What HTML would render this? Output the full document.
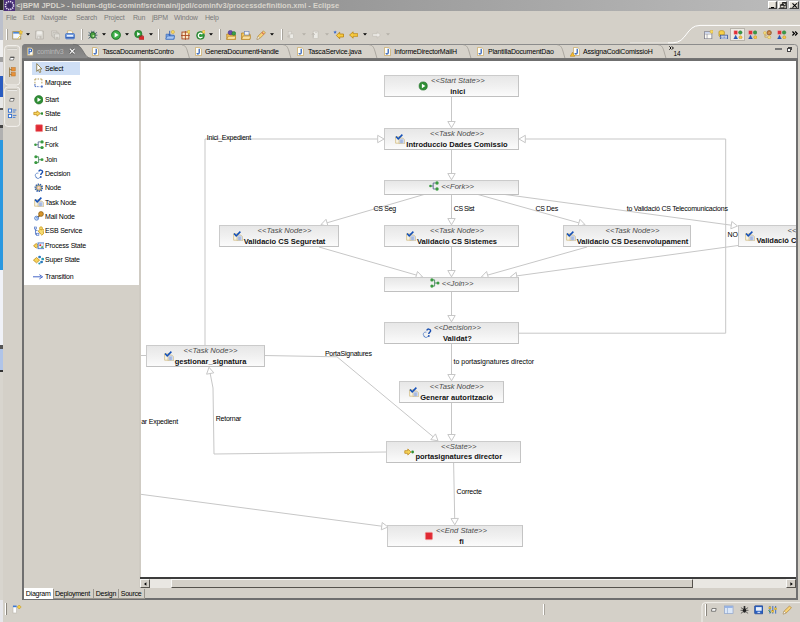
<!DOCTYPE html>
<html>
<head>
<meta charset="utf-8">
<title>jBPM JPDL - Eclipse</title>
<style>
html,body{margin:0;padding:0;}
body{width:800px;height:622px;overflow:hidden;background:#d4d0c8;position:relative;font-family:"Liberation Sans",sans-serif;font-size:7px;color:#000;}
.a{position:absolute;}
.t{position:absolute;white-space:nowrap;font-size:7px;line-height:9px;letter-spacing:-0.2px;}
#title{left:3px;top:0;width:797px;height:10.6px;background:linear-gradient(to right,#7e7e7e 0%,#bcbcbc 100%);}
#title .t{left:13.2px;top:1px;font-weight:bold;font-size:7.5px;color:#d8d4cc;letter-spacing:0;}
.menu{top:13px;color:#7a7a7a;}
.wb{position:absolute;top:0.9px;width:9.4px;height:8.6px;background:#e6e2da;border:0.7px solid;border-color:#fff #404040 #404040 #fff;box-sizing:border-box;box-shadow:inset -0.6px -0.6px 0 #9a968e;}
/* nodes */
.n{position:absolute;box-sizing:border-box;border:1px solid #cbcbcb;border-bottom-color:#c0c0c0;border-right-color:#c4c4c4;background:linear-gradient(to bottom,#e7e7e7 0%,#f0f0f0 50%,#fbfbfb 100%);}
.n{display:flex;align-items:center;justify-content:center;}
.n .c{text-align:center;white-space:nowrap;}
.st{font-style:italic;font-size:7.6px;line-height:9px;color:#4c4c4c;}
.nm{font-weight:bold;font-size:7.5px;line-height:9px;color:#111;margin-top:1.5px;}
.n.s1{padding-bottom:2.6px;}
.l{position:absolute;white-space:nowrap;font-size:7px;line-height:9px;letter-spacing:-0.22px;color:#000;}
.p{position:absolute;left:45px;white-space:nowrap;font-size:7px;line-height:9px;letter-spacing:-0.2px;}
.tab{position:absolute;top:47px;white-space:nowrap;font-size:7px;line-height:9px;letter-spacing:-0.18px;color:#000;}
</style>
</head>
<body>
<!-- left strip of window behind -->
<div class="a" style="left:0;top:0;width:2.8px;height:622px;background:linear-gradient(to bottom,#2a2a2a 0px,#2a2a2a 10.5px,#bcc0cc 10.5px,#bcc0cc 40px,#f0f0f0 40px,#f0f0f0 57px,#a0a0a0 57px,#a0a0a0 62px,#e0e0e4 62px,#e0e0e4 76px,#2a5cc0 76px,#2a5cc0 97px,#e8e8e8 97px,#e8e8e8 108px,#555 108px,#555 110px,#d0d0d0 110px,#d0d0d0 125px,#444 125px,#444 128px,#b0b0b0 128px,#b0b0b0 140px,#2a98e0 140px,#2a98e0 270px,#f0f2f8 270px,#f0f2f8 345px,#555 345px,#555 349px,#b0c4e8 349px,#b0c4e8 370px,#333 370px,#333 372px,#d8d5ce 372px,#d8d5ce 600px,#e6e6ea 600px,#e6e6ea 622px);"></div>

<!-- title bar -->
<div id="title" class="a">
  <svg class="a" style="left:1px;top:0" width="11" height="11" viewBox="0 0 11 11"><rect width="11" height="11" fill="#4b2f7c"/><circle cx="5.5" cy="5.5" r="4" fill="none" stroke="#e8e4f0" stroke-width="1.6" stroke-dasharray="1.2 0.9"/><circle cx="5.5" cy="5.5" r="2.6" fill="#3a2a66"/></svg>
  <div class="t">&lt;jBPM JPDL&gt; - helium-dgtic-cominf/src/main/jpdl/cominfv3/processdefinition.xml - Eclipse</div>
  <div class="wb" style="left:764.7px"><div class="a" style="left:2.2px;top:5.6px;width:3.4px;height:1px;background:#000"></div></div>
  <div class="wb" style="left:774.6px"><svg class="a" style="left:1.2px;top:0.6px" width="6.4" height="6.4" viewBox="0 0 6.4 6.4"><path d="M2.4 0.7H5.8V3.6H2.4z" fill="#e6e2da" stroke="#000" stroke-width="0.7"/><path d="M2.4 0.9H5.8" stroke="#000" stroke-width="1.1"/><path d="M0.6 2.8H4V5.8H0.6z" fill="#e6e2da" stroke="#000" stroke-width="0.7"/><path d="M0.6 3H4" stroke="#000" stroke-width="1.1"/></svg></div>
  <div class="wb" style="left:785.8px;width:9.8px"><svg class="a" style="left:1.8px;top:1.2px" width="5.4" height="5" viewBox="0 0 5.4 5"><path d="M0.5 0.4L4.9 4.6M4.9 0.4L0.5 4.6" stroke="#000" stroke-width="1.1"/></svg></div>
</div>

<!-- menu bar -->
<div class="t menu" style="left:6px">File</div>
<div class="t menu" style="left:23px">Edit</div>
<div class="t menu" style="left:41px">Navigate</div>
<div class="t menu" style="left:76px">Search</div>
<div class="t menu" style="left:104px">Project</div>
<div class="t menu" style="left:133px">Run</div>
<div class="t menu" style="left:152px">jBPM</div>
<div class="t menu" style="left:174px">Window</div>
<div class="t menu" style="left:205px">Help</div>

<!-- TOOLBAR -->
<div class="a" style="left:5.5px;top:28.5px;width:1px;height:11px;background:#fff"></div><div class="a" style="left:6.5px;top:28.5px;width:0.7px;height:11px;background:#a8a49c"></div><svg class="a" style="left:12px;top:29.5px" width="10.5" height="10" viewBox="0 0 10 10"><rect x="0.5" y="1.6" width="8" height="7.4" fill="#f4f8ff" stroke="#a08a50" stroke-width="0.8"/><rect x="0.9" y="2" width="7.2" height="1.6" fill="#4a86d8"/><path d="M5 9L8.6 5" stroke="#f0d060" stroke-width="1"/><path d="M8.4 0l0.7 1.5l1.6 0.2l-1.2 1.1l0.3 1.6l-1.4-0.8l-1.4 0.8l0.3-1.6l-1.2-1.1l1.6-0.2z" fill="#f8d040" stroke="#c89a20" stroke-width="0.4"/></svg><svg class="a" style="left:26px;top:33.3px" width="4" height="3" viewBox="0 0 4 3"><path d="M0 0.2H4L2 2.6z" fill="#000"/></svg><svg class="a" style="left:35.3px;top:29.5px" width="9.5" height="10" viewBox="0 0 10 10"><path d="M0.6 0.8h8.2v8.4H0.6z" fill="#dcdad4" stroke="#b4b0a8" stroke-width="0.8"/><rect x="2.2" y="1" width="5" height="3.4" fill="#efeeea"/><rect x="2.6" y="6" width="4.2" height="3" fill="#c4c0b8"/><rect x="3.4" y="6.6" width="1.2" height="2" fill="#eee"/></svg><svg class="a" style="left:50.7px;top:29.5px" width="9.3" height="10" viewBox="0 0 10 10"><path d="M0.6 0.6h5.6v5.6H0.6z" fill="#dcdad4" stroke="#b8b4ac" stroke-width="0.7"/><path d="M2.2 2.2h5.6v5.6H2.2z" fill="#dcdad4" stroke="#b8b4ac" stroke-width="0.7"/><path d="M3.8 3.8h5.6v5.6H3.8z" fill="#e2e0da" stroke="#b4b0a8" stroke-width="0.7"/><rect x="5" y="7" width="3" height="2.2" fill="#c4c0b8"/></svg><svg class="a" style="left:65.2px;top:29.5px" width="10" height="10" viewBox="0 0 10 10"><path d="M2.6 4.4V0.8h3.8l1.2 1.2V4.4" fill="#fffdf2" stroke="#c8a860" stroke-width="0.7"/><path d="M0.6 4.4Q0.6 3.6 1.4 3.6H8.6Q9.4 3.6 9.4 4.4V8Q9.4 8.8 8.6 8.8H1.4Q0.6 8.8 0.6 8z" fill="#7ea4e0" stroke="#3c6cc0" stroke-width="0.8"/><rect x="2" y="5" width="6" height="1.6" fill="#e8f0fc"/><path d="M1 7.6h8" stroke="#2c58b0" stroke-width="0.9"/></svg><div class="a" style="left:81.25px;top:28.5px;width:1px;height:11px;background:#fff"></div><div class="a" style="left:82.25px;top:28.5px;width:0.7px;height:11px;background:#a8a49c"></div><svg class="a" style="left:88.3px;top:29.5px" width="9.6" height="10" viewBox="0 0 10 10"><ellipse cx="5" cy="5.2" rx="2.6" ry="3.2" fill="#4aa040" stroke="#1f5a28" stroke-width="0.8"/><path d="M0.6 2.2L2.8 3.8M9.4 2.2L7.2 3.8M0.2 5.2H2.4M9.8 5.2H7.6M0.6 8.6L2.8 6.8M9.4 8.6L7.2 6.8M3.6 0.6L4.4 2.2M6.4 0.6L5.6 2.2" stroke="#244a60" stroke-width="0.8"/><circle cx="5.6" cy="6" r="1.1" fill="#b8e8a0"/></svg><svg class="a" style="left:102.2px;top:33.3px" width="4" height="3" viewBox="0 0 4 3"><path d="M0 0.2H4L2 2.6z" fill="#000"/></svg><svg class="a" style="left:111px;top:29.5px" width="10" height="10" viewBox="0 0 10 10"><circle cx="5" cy="5" r="4.5" fill="#2f9a3a" stroke="#1f6b25" stroke-width="0.7"/><circle cx="5" cy="5" r="3.6" fill="#3fb04a"/><path d="M3.6 2.4L7.6 5L3.6 7.6z" fill="#fff"/></svg><svg class="a" style="left:125.2px;top:33.3px" width="4" height="3" viewBox="0 0 4 3"><path d="M0 0.2H4L2 2.6z" fill="#000"/></svg><svg class="a" style="left:133.6px;top:29.5px" width="10.6" height="10" viewBox="0 0 10 10"><circle cx="4" cy="4" r="3.7" fill="#2f9a3a" stroke="#1f6b25" stroke-width="0.6"/><path d="M2.8 2L6.2 4L2.8 6z" fill="#fff"/><rect x="5" y="6.4" width="5.2" height="3.2" rx="0.5" fill="#d8282c" stroke="#a01818" stroke-width="0.5"/><path d="M6.6 6.4V5.6h2v0.8" fill="none" stroke="#a01818" stroke-width="0.6"/></svg><svg class="a" style="left:148.5px;top:33.3px" width="4" height="3" viewBox="0 0 4 3"><path d="M0 0.2H4L2 2.6z" fill="#000"/></svg><div class="a" style="left:158.2px;top:28.5px;width:1px;height:11px;background:#fff"></div><div class="a" style="left:159.2px;top:28.5px;width:0.7px;height:11px;background:#a8a49c"></div><svg class="a" style="left:165px;top:29.5px" width="10.2" height="10" viewBox="0 0 10 10"><path d="M1 4.2h3l0.8 1H9v4H1z" fill="#7ea8e6" stroke="#3466b8" stroke-width="0.7"/><path d="M0.6 9.2L2.2 6h7.4L8.4 9.2z" fill="#a8c6f2" stroke="#3466b8" stroke-width="0.6"/><path d="M4.6 0.8v4.4M3.4 4.6c0.6 1 1.8 1 2.2 0" stroke="#2a58b0" stroke-width="0.9" fill="none"/><circle cx="7.8" cy="2" r="1.6" fill="#f8d860" stroke="#c8a030" stroke-width="0.5"/></svg><svg class="a" style="left:180.7px;top:29.5px" width="9.8" height="10" viewBox="0 0 10 10"><rect x="1" y="2" width="7" height="7" fill="#fbe8c8" stroke="#a8481c" stroke-width="0.9"/><path d="M4.5 1v9M0 5.5h9" stroke="#a8481c" stroke-width="0.9"/><circle cx="8" cy="1.8" r="1.6" fill="#f8d860" stroke="#c8a030" stroke-width="0.5"/></svg><svg class="a" style="left:195.5px;top:29.5px" width="9.8" height="10" viewBox="0 0 10 10"><circle cx="4.6" cy="5.4" r="4" fill="#2f9a3a" stroke="#1f6b25" stroke-width="0.6"/><path d="M6.6 4.2A2.3 2.3 0 1 0 6.6 6.8" fill="none" stroke="#fff" stroke-width="1.3"/><circle cx="8" cy="1.8" r="1.6" fill="#f8d860" stroke="#c8a030" stroke-width="0.5"/></svg><svg class="a" style="left:209.2px;top:33.3px" width="4" height="3" viewBox="0 0 4 3"><path d="M0 0.2H4L2 2.6z" fill="#000"/></svg><div class="a" style="left:218.8px;top:28.5px;width:1px;height:11px;background:#fff"></div><div class="a" style="left:219.8px;top:28.5px;width:0.7px;height:11px;background:#a8a49c"></div><svg class="a" style="left:226px;top:29.5px" width="10.4" height="10" viewBox="0 0 10 10"><path d="M0.6 4h3l0.8 1H9.4v4.4H0.6z" fill="#f4c860" stroke="#b07a18" stroke-width="0.7"/><path d="M0.6 9.4L2 6.2h7.8L8.6 9.4z" fill="#fbe0a0" stroke="#b07a18" stroke-width="0.6"/><circle cx="4.2" cy="2.6" r="2.2" fill="#6a4cb0" stroke="#3a2a80" stroke-width="0.5"/><circle cx="7.6" cy="3.4" r="1.9" fill="#3aa048" stroke="#1f6b25" stroke-width="0.5"/></svg><svg class="a" style="left:241px;top:29.5px" width="10" height="10" viewBox="0 0 10 10"><path d="M0.6 3h3l0.8 1H9v5.4H0.6z" fill="#f4c860" stroke="#b07a18" stroke-width="0.7"/><path d="M0.6 9.4L2 6h8L8.6 9.4z" fill="#fbe0a0" stroke="#b07a18" stroke-width="0.6"/><rect x="3.4" y="1.4" width="4.6" height="3.6" fill="#eef2fa" stroke="#6a80b0" stroke-width="0.6"/></svg><svg class="a" style="left:256.4px;top:29.5px" width="9.8" height="10" viewBox="0 0 10 10"><path d="M1 9.4L2 6.2L7.6 0.8L9.6 2.8L4 8.4z" fill="#f8d478" stroke="#b08030" stroke-width="0.7" stroke-linejoin="round"/><path d="M1 9.4L2 6.2L4 8.4z" fill="#fff" stroke="#a09070" stroke-width="0.5"/><path d="M6 2.4L8 4.4" stroke="#d86a50" stroke-width="1.2"/></svg><svg class="a" style="left:270.4px;top:33.3px" width="4" height="3" viewBox="0 0 4 3"><path d="M0 0.2H4L2 2.6z" fill="#000"/></svg><div class="a" style="left:280.5px;top:28.5px;width:1px;height:11px;background:#fff"></div><div class="a" style="left:281.5px;top:28.5px;width:0.7px;height:11px;background:#a8a49c"></div><svg class="a" style="left:287.4px;top:29.5px" width="8.4" height="10" viewBox="0 0 10 10"><rect x="1.4" y="0.6" width="4" height="5" fill="#e6e4de" stroke="#c0bcb4" stroke-width="0.6"/><rect x="3.4" y="3.8" width="4.4" height="5.6" fill="#ecebe6" stroke="#bcb8b0" stroke-width="0.6"/><path d="M1.6 7.6v-3M0.4 6.2l1.2 1.6l1.2-1.6" stroke="#c0bcb4" stroke-width="0.8" fill="none"/></svg><svg class="a" style="left:302px;top:33.3px" width="4" height="3" viewBox="0 0 4 3"><path d="M0 0.2H4L2 2.6z" fill="#b4b0a8"/></svg><svg class="a" style="left:310.6px;top:29.5px" width="8.8" height="10" viewBox="0 0 10 10"><rect x="2.4" y="0.6" width="5.6" height="8.6" fill="#ecebe6" stroke="#bcb8b0" stroke-width="0.6"/><path d="M2.6 8V3M1 4.8l1.6-2l1.6 2" stroke="#b8b4ac" stroke-width="0.9" fill="none"/><rect x="4.6" y="2" width="2.4" height="0.8" fill="#c8c4bc"/></svg><svg class="a" style="left:325px;top:33.3px" width="4" height="3" viewBox="0 0 4 3"><path d="M0 0.2H4L2 2.6z" fill="#b4b0a8"/></svg><svg class="a" style="left:333px;top:29.5px" width="10.6" height="10" viewBox="0 0 10 10"><path d="M3 5.4L6.4 2.2V4h3.8v3H6.4v1.8z" fill="#f8cc40" stroke="#b88210" stroke-width="0.8" stroke-linejoin="round"/><path d="M1.8 0.4l0.5 1.2l1.3 0.1l-1 0.8l0.3 1.3l-1.1-0.7l-1.1 0.7l0.3-1.3l-1-0.8l1.3-0.1z" fill="#3a6ad0"/></svg><svg class="a" style="left:349px;top:29.5px" width="9.4" height="10" viewBox="0 0 10 10"><path d="M0.6 5L4.4 1.6V3.6h5v2.8h-5v2z" fill="#f8cc40" stroke="#b88210" stroke-width="0.8" stroke-linejoin="round"/></svg><svg class="a" style="left:362.6px;top:33.3px" width="4" height="3" viewBox="0 0 4 3"><path d="M0 0.2H4L2 2.6z" fill="#000"/></svg><svg class="a" style="left:372.2px;top:29.5px" width="9.2" height="10" viewBox="0 0 10 10"><path d="M9.4 5L5.6 1.6V3.6h-5v2.8h5v2z" fill="#eceae6" stroke="#c4c0b8" stroke-width="0.8" stroke-linejoin="round"/></svg><svg class="a" style="left:386px;top:33.3px" width="4" height="3" viewBox="0 0 4 3"><path d="M0 0.2H4L2 2.6z" fill="#b4b0a8"/></svg><svg class="a" style="left:620px;top:20px" width="180" height="26" viewBox="620 20 180 26"><path d="M630 42.8H668" fill="none" stroke="#fff" stroke-width="0.9" stroke-opacity="0.45"/><path d="M668 42.8H673C687 42.8 686 25.4 700 25.4H800" fill="none" stroke="#fff" stroke-width="1"/></svg><div class="a" style="left:730px;top:27.5px;width:15px;height:13px;box-sizing:border-box;background:#eceae4;border:0.8px solid #b8b4ac;"></div><svg class="a" style="left:703.6px;top:29.6px" width="9.6" height="9.6" viewBox="0 0 10 10"><rect x="0.6" y="1.8" width="7.6" height="7.4" fill="#fdfcf4" stroke="#7a7a88" stroke-width="0.8"/><path d="M0.6 4.2h7.6M3.2 4.2v5" stroke="#8a8aa0" stroke-width="0.7"/><rect x="0.9" y="2.1" width="7" height="1.4" fill="#c8d4f0"/><circle cx="8" cy="1.8" r="1.7" fill="#f8d860" stroke="#c8a030" stroke-width="0.5"/></svg><svg class="a" style="left:718.2px;top:29.6px" width="10" height="9.6" viewBox="0 0 10 10"><ellipse cx="3.6" cy="2" rx="2.8" ry="1.4" fill="#f8d048" stroke="#b08818" stroke-width="0.6"/><path d="M0.8 2v4c0 1.8 5.6 1.8 5.6 0V2" fill="#f8d048" stroke="#b08818" stroke-width="0.6"/><path d="M0.8 4c0 1.6 5.6 1.6 5.6 0" fill="none" stroke="#b08818" stroke-width="0.5"/><rect x="2.2" y="5.4" width="7.4" height="4" fill="#eef2fc" stroke="#2a4a98" stroke-width="0.8"/><path d="M3.2 7.4h5.4" stroke="#2a4a98" stroke-width="1" stroke-dasharray="1 0.5"/></svg><svg class="a" style="left:733.2px;top:29.6px" width="10" height="9.6" viewBox="0 0 10 10"><rect x="0.8" y="0.8" width="3.6" height="3.6" fill="#e03038" stroke="#f09098" stroke-width="0.5"/><circle cx="7.4" cy="2.6" r="1.9" fill="#3a9a48" stroke="#1f6b25" stroke-width="0.4"/><path d="M2.6 5.4L4.6 9.4H0.6z" fill="#2458c0" stroke="#1a3c90" stroke-width="0.4"/><circle cx="7.6" cy="7.6" r="1.6" fill="#f8c848" stroke="#c08a1a" stroke-width="0.5"/></svg><svg class="a" style="left:747.8px;top:29.6px" width="9.6" height="9.6" viewBox="0 0 10 10"><rect x="0.8" y="0.8" width="3.6" height="3.6" fill="#e03038" stroke="#f09098" stroke-width="0.5"/><circle cx="7.4" cy="2.6" r="1.9" fill="#3a9a48" stroke="#1f6b25" stroke-width="0.4"/><path d="M2.6 5.4L4.6 9.4H0.6z" fill="#2458c0" stroke="#1a3c90" stroke-width="0.4"/><circle cx="7.6" cy="7.6" r="1.6" fill="#f8c848" stroke="#c08a1a" stroke-width="0.5"/></svg><svg class="a" style="left:763px;top:29.6px" width="9.4" height="9.6" viewBox="0 0 10 10"><circle cx="6.6" cy="2.8" r="2.4" fill="#c07838" stroke="#7a4418" stroke-width="0.6"/><path d="M5.4 1.6L7.8 4M7.8 1.6L5.4 4" stroke="#e8c090" stroke-width="0.5"/><path d="M2 3.4V7.6H5.6M2 5.4H4.4" stroke="#c8a040" stroke-width="0.7" fill="none"/><circle cx="2" cy="3" r="1.5" fill="#f8e080" stroke="#c8a040" stroke-width="0.5"/><circle cx="6.6" cy="7.6" r="1.7" fill="#f8e080" stroke="#c8a040" stroke-width="0.5"/></svg><svg class="a" style="left:777.4px;top:29.6px" width="9.6" height="9.6" viewBox="0 0 10 10"><rect x="0.8" y="0.8" width="3.6" height="3.6" fill="#e03038" stroke="#f09098" stroke-width="0.5"/><circle cx="7.4" cy="2.6" r="1.9" fill="#3a9a48" stroke="#1f6b25" stroke-width="0.4"/><path d="M2.6 5.4L4.6 9.4H0.6z" fill="#2458c0" stroke="#1a3c90" stroke-width="0.4"/><circle cx="7.6" cy="7.6" r="1.6" fill="#f8c848" stroke="#c08a1a" stroke-width="0.5"/></svg><svg class="a" style="left:791.6px;top:30.6px" width="6" height="5" viewBox="0 0 6 5"><path d="M0.4 0.5L2.4 2.5L0.4 4.5M3.2 0.5L5.2 2.5L3.2 4.5" fill="none" stroke="#000" stroke-width="1.25"/></svg>

<!-- TABS -->
<svg class="a" style="left:20px;top:42px" width="780" height="20" viewBox="20 42 780 20"><defs><linearGradient id="tg" x1="0" y1="0" x2="0" y2="1"><stop offset="0" stop-color="#7c7c7c"/><stop offset="1" stop-color="#8e8e8e"/></linearGradient></defs><path d="M22.5 60V47.5Q22.5 44.5 25.5 44.5H794.5Q797.5 44.5 797.5 47.5V60" fill="#d6d2ca" stroke="#8c8c8c" stroke-width="1"/><path d="M22 60V47.5Q22 44 25.5 44H73C79 44 80.5 47 83 51C86 56 87.5 58 91 58H798V60z" fill="url(#tg)"/><path d="M22 58.2H798V60.5H22z" fill="#6c6c6c"/><path d="M73 44.4C79 44.4 80.5 47 83 51C86 56 87.5 58 91 58" fill="none" stroke="#6a6a6a" stroke-width="0.8"/><path d="M182 45C185 45 186.4 47.5 187.4 51L189.4 58" fill="none" stroke="#a09c94" stroke-width="0.8"/><path d="M283.5 45C286.5 45 287.9 47.5 288.9 51L290.9 58" fill="none" stroke="#a09c94" stroke-width="0.8"/><path d="M369.5 45C372.5 45 373.9 47.5 374.9 51L376.9 58" fill="none" stroke="#a09c94" stroke-width="0.8"/><path d="M463.5 45C466.5 45 467.9 47.5 468.9 51L470.9 58" fill="none" stroke="#a09c94" stroke-width="0.8"/><path d="M557.5 45C560.5 45 561.9 47.5 562.9 51L564.9 58" fill="none" stroke="#a09c94" stroke-width="0.8"/><path d="M658.5 45C661.5 45 662.9 47.5 663.9 51L665.9 58" fill="none" stroke="#a09c94" stroke-width="0.8"/></svg><svg class="a" style="left:27.4px;top:47.2px" width="6.4" height="9" viewBox="0 0 7 9"><path d="M0.5 0.5H4.8L6.5 2.2V8.5H0.5z" fill="#fffef6" stroke="#c8a860" stroke-width="0.7"/><path d="M2.2 7.6V1.8H3.6C5.6 1.8 5.6 4.8 3.6 4.8H2.2" fill="none" stroke="#2458b8" stroke-width="1.2"/></svg><div class="tab" style="left:37px;color:#b6b6b6">cominfv3</div><svg class="a" style="left:68.6px;top:48.4px" width="6.4" height="6.4" viewBox="0 0 6.4 6.4"><path d="M0.8 0.8L5.6 5.6M5.6 0.8L0.8 5.6" stroke="#4a4a4a" stroke-width="2.4"/><path d="M0.8 0.8L5.6 5.6M5.6 0.8L0.8 5.6" stroke="#f4f4f4" stroke-width="1.3"/></svg><svg class="a" style="left:92.4px;top:47.2px" width="7" height="9" viewBox="0 0 7 9"><path d="M0.5 0.5H4.8L6.5 2.2V8.5H0.5z" fill="#fffef6" stroke="#c8a860" stroke-width="0.7"/><path d="M4.2 1.8V5.8C4.2 7.4 2.2 7.4 2 6" fill="none" stroke="#2458b8" stroke-width="1.2"/></svg><div class="tab" style="left:102.5px">TascaDocumentsContro</div><svg class="a" style="left:194.6px;top:47.2px" width="7" height="9" viewBox="0 0 7 9"><path d="M0.5 0.5H4.8L6.5 2.2V8.5H0.5z" fill="#fffef6" stroke="#c8a860" stroke-width="0.7"/><path d="M4.2 1.8V5.8C4.2 7.4 2.2 7.4 2 6" fill="none" stroke="#2458b8" stroke-width="1.2"/></svg><div class="tab" style="left:205px">GeneraDocumentHandle</div><svg class="a" style="left:297px;top:47.2px" width="7" height="9" viewBox="0 0 7 9"><path d="M0.5 0.5H4.8L6.5 2.2V8.5H0.5z" fill="#fffef6" stroke="#c8a860" stroke-width="0.7"/><path d="M4.2 1.8V5.8C4.2 7.4 2.2 7.4 2 6" fill="none" stroke="#2458b8" stroke-width="1.2"/></svg><div class="tab" style="left:308px">TascaService.java</div><svg class="a" style="left:384px;top:47.2px" width="7" height="9" viewBox="0 0 7 9"><path d="M0.5 0.5H4.8L6.5 2.2V8.5H0.5z" fill="#fffef6" stroke="#c8a860" stroke-width="0.7"/><path d="M4.2 1.8V5.8C4.2 7.4 2.2 7.4 2 6" fill="none" stroke="#2458b8" stroke-width="1.2"/></svg><div class="tab" style="left:394.3px">InformeDirectorMailH</div><svg class="a" style="left:477.4px;top:47.2px" width="7" height="9" viewBox="0 0 7 9"><path d="M0.5 0.5H4.8L6.5 2.2V8.5H0.5z" fill="#fffef6" stroke="#c8a860" stroke-width="0.7"/><path d="M4.2 1.8V5.8C4.2 7.4 2.2 7.4 2 6" fill="none" stroke="#2458b8" stroke-width="1.2"/></svg><div class="tab" style="left:488px">PlantillaDocumentDao</div><svg class="a" style="left:572.6px;top:47.2px" width="7" height="9" viewBox="0 0 7 9"><path d="M0.5 0.5H4.8L6.5 2.2V8.5H0.5z" fill="#fffef6" stroke="#c8a860" stroke-width="0.7"/><path d="M4.2 1.8V5.8C4.2 7.4 2.2 7.4 2 6" fill="none" stroke="#2458b8" stroke-width="1.2"/></svg><svg class="a" style="left:570.4px;top:52.4px" width="5" height="4.6" viewBox="0 0 5 4.6"><path d="M2.5 0.3L4.8 4.3H0.2z" fill="#f8c030" stroke="#b07a10" stroke-width="0.5"/></svg><div class="tab" style="left:583px">AssignaCodiComissioH</div><svg class="a" style="left:669px;top:46.4px" width="5" height="4" viewBox="0 0 5 4"><path d="M0.4 0.4L2 2L0.4 3.6M2.8 0.4L4.4 2L2.8 3.6" fill="none" stroke="#000" stroke-width="1"/></svg><div class="t" style="left:673.6px;top:48.6px;font-size:6.4px;letter-spacing:-0.2px">14</div><div class="a" style="left:775.4px;top:47.6px;width:6.2px;height:2.6px;box-sizing:border-box;border:0.6px solid #777;background:#fff"></div><div class="a" style="left:788.4px;top:46.6px;width:4px;height:3.6px;box-sizing:border-box;border:0.7px solid #444;border-top-width:1.1px;background:#fff"></div><div class="a" style="left:786.8px;top:48.4px;width:4px;height:3.8px;box-sizing:border-box;border:0.7px solid #444;border-top-width:1.1px;background:#fff"></div><svg class="a" style="left:3px;top:44px" width="19" height="90" viewBox="3 44 19 90"><rect x="4.6" y="45.6" width="15.2" height="39.4" rx="3.2" fill="#d8d4cc" stroke="#f4f2ee" stroke-width="1"/><path d="M7.4 48.4H17" stroke="#a8a49c" stroke-width="0.8"/><path d="M7.4 49.1H17" stroke="#fff" stroke-width="0.6"/><rect x="4.6" y="87" width="15.2" height="39.4" rx="3.2" fill="#d8d4cc" stroke="#f4f2ee" stroke-width="1"/><path d="M7.4 89.8H17" stroke="#a8a49c" stroke-width="0.8"/><path d="M7.4 90.5H17" stroke="#fff" stroke-width="0.6"/><path d="M10.4 57.2H14.2L13.4 60H9.6z" fill="#fff" stroke="#444" stroke-width="0.6"/><path d="M10.4 57.35H14.2" stroke="#444" stroke-width="0.9"/><path d="M10.4 98.4H14.2L13.4 101.2H9.6z" fill="#fff" stroke="#444" stroke-width="0.6"/><path d="M10.4 98.55H14.2" stroke="#444" stroke-width="0.9"/><path d="M9.6 67.4V77M9.6 69.6H12M9.6 74.4H12" stroke="#8a6a30" stroke-width="0.8" fill="none"/><rect x="11.6" y="67.6" width="3.6" height="3.4" fill="#e8923a" stroke="#b86a18" stroke-width="0.5"/><rect x="11.6" y="72.6" width="3.6" height="3.4" fill="#e8923a" stroke="#b86a18" stroke-width="0.5"/><rect x="8.4" y="109" width="3.2" height="3.2" fill="#fff" stroke="#2a6ad0" stroke-width="0.9"/><rect x="8.4" y="114.4" width="3.2" height="3.2" fill="#fff" stroke="#2a6ad0" stroke-width="0.9"/><path d="M12.8 110H16.4M12.8 112H15.4M12.8 115.4H16.4M12.8 117.4H15.4" stroke="#2a6ad0" stroke-width="0.8"/></svg>

<!-- EDITOR -->

<!-- editor frame -->
<div class="a" style="left:22px;top:59px;width:776px;height:541px;background:#6f6f6f;"></div>
<div class="a" style="left:24px;top:61px;width:772px;height:537px;background:#d4d0c8;"></div>
<!-- palette -->
<div class="a" style="left:24px;top:60.5px;width:115px;height:224.5px;background:#fff;"></div>
<div class="a" style="left:32px;top:62px;width:48px;height:13px;background:#cfdff5;"></div>
<div class="p" style="top:64px">Select</div>
<div class="p" style="top:78px">Marquee</div>
<div class="p" style="top:95px">Start</div>
<div class="p" style="top:109px">State</div>
<div class="p" style="top:124px">End</div>
<div class="p" style="top:140px">Fork</div>
<div class="p" style="top:155px">Join</div>
<div class="p" style="top:169px">Decision</div>
<div class="p" style="top:183px">Node</div>
<div class="p" style="top:198px">Task Node</div>
<div class="p" style="top:212px">Mail Node</div>
<div class="p" style="top:226px">ESB Service</div>
<div class="p" style="top:241px">Process State</div>
<div class="p" style="top:255px">Super State</div>
<div class="p" style="top:272px">Transition</div>
<svg preserveAspectRatio="none" style="position:absolute;left:35.8px;top:63.4px;" width="7.4" height="10" viewBox="0 0 10 10"><path d="M1 0.6V8.4L3.2 6.6L5 9.7L6.6 8.9L4.9 6H8z" fill="#fff" stroke="#7c6c34" stroke-width="0.9" stroke-linejoin="round"/></svg>
<svg preserveAspectRatio="none" style="position:absolute;left:34.4px;top:78px;" width="9.4" height="10" viewBox="0 0 10 10"><path d="M1 1h7.4" stroke="#a89040" stroke-width="0.9" stroke-dasharray="1.6 1.2"/><path d="M1 1v6M8.4 1v5" stroke="#a89040" stroke-width="0.9" stroke-dasharray="1.6 1.2"/><path d="M1 8.6h5" stroke="#3a60c0" stroke-width="0.9" stroke-dasharray="1.4 1"/><path d="M1 6v2.4M7 8.6h2.4M8.4 7.2v2.6" stroke="#3a60c0" stroke-width="0.9"/></svg>
<svg preserveAspectRatio="none" style="position:absolute;left:33.8px;top:95px;" width="9.6" height="9.6" viewBox="0 0 10 10"><circle cx="5" cy="5" r="4.4" fill="#2f8f35" stroke="#1f6b25" stroke-width="0.6"/><path d="M3.6 2.6L7.4 5L3.6 7.4z" fill="#fff"/></svg>
<svg preserveAspectRatio="none" style="position:absolute;left:33px;top:109.4px;" width="10.4" height="9" viewBox="0 0 10 10"><path d="M7 5L3.8 2v1.7H0.8v2.6h3V8z" fill="#f6d45a" stroke="#c08a1a" stroke-width="0.8" stroke-linejoin="round"/><circle cx="8.6" cy="5" r="1.4" fill="#2f8f35"/></svg>
<svg preserveAspectRatio="none" style="position:absolute;left:35px;top:124px;" width="8.6" height="8.6" viewBox="0 0 10 10"><rect x="0.8" y="0.8" width="8" height="8" rx="0.8" fill="#e02a34" stroke="#f08a8a" stroke-width="0.8"/></svg>
<svg preserveAspectRatio="none" style="position:absolute;left:33.6px;top:140px;" width="10" height="9.4" viewBox="0 0 10 10"><path d="M2.6 5h1.6M4.2 2v6M4.2 2h2.4M4.2 8h2.4" stroke="#5a6a90" stroke-width="0.9" fill="none"/><circle cx="1.5" cy="5" r="1.35" fill="#3a9a40"/><circle cx="8" cy="2" r="1.7" fill="#3a9a40"/><circle cx="8" cy="8" r="1.7" fill="#3a9a40"/></svg>
<svg preserveAspectRatio="none" style="position:absolute;left:33.6px;top:154.6px;" width="10" height="9.4" viewBox="0 0 10 10"><path d="M3 1.9h1.6v6.2H3M4.6 5h2.4" stroke="#4a8a60" stroke-width="0.9" fill="none"/><circle cx="1.9" cy="1.9" r="1.6" fill="#3a9a40"/><circle cx="1.9" cy="8.1" r="1.6" fill="#3a9a40"/><circle cx="8" cy="5" r="1.5" fill="#3a9a40"/></svg>
<svg preserveAspectRatio="none" style="position:absolute;left:33.8px;top:168.6px;" width="10" height="10" viewBox="0 0 10 10"><path d="M5 2.6C5 0.6 8.6 0.6 8.6 2.8C8.6 4.4 6.8 4.2 6.8 6" fill="none" stroke="#1a4fb0" stroke-width="1.5"/><circle cx="6.8" cy="8" r="0.9" fill="#1a4fb0"/><path d="M4.4 4.2C1.4 3.6 0.2 6.8 2.4 8.4M3 9.2C5 9.8 6 9 5.4 8" fill="none" stroke="#5f86c8" stroke-width="0.9"/><path d="M1.4 8.8l1.8 0.6l-0.6 -1.8z" fill="#5f86c8"/></svg>
<svg preserveAspectRatio="none" style="position:absolute;left:33.8px;top:182.8px;" width="9.6" height="9.6" viewBox="0 0 10 10"><circle cx="5" cy="5" r="3.6" fill="#f5d36a" stroke="#2a5cb8" stroke-width="1.8" stroke-dasharray="1.3 0.9"/><circle cx="5" cy="5" r="2.6" fill="#f7dc80" stroke="#2a5cb8" stroke-width="0.6"/><circle cx="5" cy="5" r="1.2" fill="#fff0f0" stroke="#e09090" stroke-width="0.5"/></svg>
<svg preserveAspectRatio="none" style="position:absolute;left:33.8px;top:197px;" width="10" height="10" viewBox="0 0 10 10"><path d="M0.6 2.8h4.4l1.8 1.8v4.6H0.6z" fill="#f6f3e6" stroke="#d0b878" stroke-width="0.7"/><path d="M4 4h3.8l1.8 1.8v4H4z" fill="#ccd8f0" stroke="#d8c080" stroke-width="0.7"/><path d="M5.2 5.6h2.6v3.6H5.2z" fill="#a4b8e0"/><path d="M1 2.4L3.2 4.8L7.4 0.6" fill="none" stroke="#1450b8" stroke-width="1.5"/></svg>
<svg preserveAspectRatio="none" style="position:absolute;left:33.8px;top:211px;" width="10" height="10" viewBox="0 0 10 10"><circle cx="7" cy="3" r="2.4" fill="#d8962c" stroke="#8a5a10" stroke-width="0.7"/><path d="M5.6 4.4L3 7" stroke="#8a5a10" stroke-width="1.4"/><circle cx="2.6" cy="7.2" r="2" fill="#cfe0f8" stroke="#4a78c8" stroke-width="0.8"/><path d="M2 6.4h1.2v1.6" stroke="#4a78c8" stroke-width="0.6" fill="none"/></svg>
<svg preserveAspectRatio="none" style="position:absolute;left:33.8px;top:225.6px;" width="10.6" height="10" viewBox="0 0 10 10"><path d="M1.4 2v6.4h2.2M1.4 4.6h2" stroke="#4a70c0" stroke-width="0.8" fill="none"/><rect x="0.4" y="1" width="2" height="2" fill="#dfe8fa" stroke="#4a70c0" stroke-width="0.6"/><rect x="2.4" y="7.2" width="2.2" height="2.2" fill="#dfe8fa" stroke="#4a70c0" stroke-width="0.6"/><path d="M4 5l2.2-2.2l1.2 1.2l1-1l1.4 1.4l-1.4 1.4l1.2 1.2l-2.2 2.2l-1.2-1.2z" fill="#f7dc70" stroke="#c89a20" stroke-width="0.8" stroke-linejoin="round"/><circle cx="6.6" cy="2.2" r="1.4" fill="#f7dc70" stroke="#c89a20" stroke-width="0.7"/></svg>
<svg preserveAspectRatio="none" style="position:absolute;left:32.8px;top:240.6px;" width="11" height="9.6" viewBox="0 0 10 10"><path d="M0.5 5L2.9 2.6L5.3 5L2.9 7.4z" fill="#f6d45a" stroke="#c08a1a" stroke-width="0.8" stroke-linejoin="round"/><rect x="4.6" y="2" width="5.6" height="6" fill="#e4eefc" stroke="#4a78c8" stroke-width="0.9"/><circle cx="6.6" cy="4.4" r="0.9" fill="#e03030"/><path d="M7 7l1.4-2l1 2z" fill="#3a9a40"/></svg>
<svg preserveAspectRatio="none" style="position:absolute;left:32.8px;top:255px;" width="11" height="9.6" viewBox="0 0 10 10"><path d="M0.4 5.4L3.2 2.6L6 5.4L3.2 8.2z" fill="#f6d45a" stroke="#c08a1a" stroke-width="0.8" stroke-linejoin="round"/><circle cx="6" cy="2.2" r="1.3" fill="#2a7ac0"/><circle cx="8.8" cy="4.2" r="1.3" fill="#2a9ab0"/><circle cx="7.8" cy="7.4" r="1.3" fill="#2a7ac0"/><circle cx="5.8" cy="8.8" r="1" fill="#2a9ab0"/></svg>
<svg preserveAspectRatio="none" style="position:absolute;left:33.4px;top:271.6px;" width="10" height="9.6" viewBox="0 0 10 10"><path d="M0 5h8" stroke="#2a50c0" stroke-width="0.9"/><path d="M6.4 2.8L9.6 5L6.4 7.2" fill="none" stroke="#2a50c0" stroke-width="0.9"/></svg>
<!-- palette / canvas separator -->
<div class="a" style="left:139px;top:60.5px;width:2px;height:527px;background:#cfcbc3;"></div>
<!-- canvas -->
<div id="canvas" class="a" style="left:141px;top:61px;width:655px;height:517px;background:#fff;overflow:hidden;">
<svg class="a" style="left:-141px;top:-61px" width="800" height="622" viewBox="0 0 800 622" fill="none" stroke="#c7c7c7" stroke-width="1">
<g id="edges">
<path d="M451.5 97.0L451.5 121.5"/><path d="M447.8 121.5L451.5 127.8L455.2 121.5z" fill="#fff"/>
<path d="M451.5 149.0L451.5 173.5"/><path d="M447.8 173.5L451.5 179.8L455.2 173.5z" fill="#fff"/>
<path d="M451.5 194.0L451.5 218.5"/><path d="M447.8 218.5L451.5 224.8L455.2 218.5z" fill="#fff"/>
<path d="M451.5 247.0L451.5 270.5"/><path d="M447.8 270.5L451.5 276.8L455.2 270.5z" fill="#fff"/>
<path d="M451.5 292.0L451.5 315.5"/><path d="M447.8 315.5L451.5 321.8L455.2 315.5z" fill="#fff"/>
<path d="M451.5 344.0L451.5 374.5"/><path d="M447.8 374.5L451.5 380.8L455.2 374.5z" fill="#fff"/>
<path d="M451.5 403.0L451.5 434.5"/><path d="M447.8 434.5L451.5 440.8L455.2 434.5z" fill="#fff"/>
<path d="M424.0 194.5L327.0 222.8"/><path d="M326.0 219.3L321.0 224.6L328.1 226.4z" fill="#fff"/>
<path d="M478.0 194.5L578.9 222.9"/><path d="M577.9 226.5L585.0 224.6L579.9 219.3z" fill="#fff"/>
<path d="M505.0 194.5L731.3 225.2"/><path d="M730.8 228.8L737.5 226.0L731.8 221.5z" fill="#fff"/>
<path d="M319.0 247.0L416.4 275.1"/><path d="M415.4 278.6L422.5 276.8L417.5 271.5z" fill="#fff"/>
<path d="M587.0 247.0L487.6 275.1"/><path d="M486.6 271.5L481.5 276.8L488.6 278.6z" fill="#fff"/>
<path d="M738.0 245.5L516.7 275.9"/><path d="M516.2 272.3L510.5 276.8L517.2 279.6z" fill="#fff"/>
<path d="M519.0 333.2L725.7 333.2L725.7 139.0L525.3 139.0"/><path d="M525.3 135.3L519.0 139.0L525.3 142.7z" fill="#fff"/>
<path d="M205.0 345.0L205.0 139.0L377.7 139.0"/><path d="M377.7 142.7L384.0 139.0L377.7 135.3z" fill="#fff"/>
<path d="M264.0 355.5L337.0 356.8L433.2 436.8"/><path d="M430.8 439.6L438.0 440.8L435.5 433.9z" fill="#fff"/>
<path d="M386.0 452.0L214.0 454.0L213.0 388.0L210.2 373.5"/><path d="M213.8 372.8L209.0 367.3L206.6 374.2z" fill="#fff"/>
<path d="M140.0 494.2L381.8 526.2"/><path d="M381.3 529.8L388.0 527.0L382.2 522.5z" fill="#fff"/>
<path d="M453.6 462.0L454.7 518.5"/><path d="M451.0 518.6L454.8 524.8L458.4 518.4z" fill="#fff"/>
<path d="M140 355.5H146"/>
</g>
</svg>
<div class="n" style="left:243px;top:14px;width:135px;height:22px"><svg preserveAspectRatio="none" style="flex:none;margin-right:2.6px;" width="10" height="10" viewBox="0 0 10 10"><circle cx="5.2" cy="5" r="4.1" fill="#2f8f35" stroke="#1f6b25" stroke-width="0.6"/><path d="M3.9 2.8L7.4 5L3.9 7.2z" fill="#fff"/></svg><div class="c"><div class="st">&lt;&lt;Start State&gt;&gt;</div><div class="nm">inici</div></div></div>
<div class="n" style="left:243px;top:67px;width:135px;height:21.5px"><svg preserveAspectRatio="none" style="flex:none;margin-right:1px;" width="10" height="10" viewBox="0 0 10 10"><path d="M0.6 2.8h4.4l1.8 1.8v4.6H0.6z" fill="#f6f3e6" stroke="#d0b878" stroke-width="0.7"/><path d="M4 4h3.8l1.8 1.8v4H4z" fill="#ccd8f0" stroke="#d8c080" stroke-width="0.7"/><path d="M5.2 5.6h2.6v3.6H5.2z" fill="#a4b8e0"/><path d="M1 2.4L3.2 4.8L7.4 0.6" fill="none" stroke="#1450b8" stroke-width="1.5"/></svg><div class="c"><div class="st">&lt;&lt;Task Node&gt;&gt;</div><div class="nm">Introduccio Dades Comissio</div></div></div>
<div class="n s1" style="left:243px;top:119px;width:135px;height:15px"><svg preserveAspectRatio="none" style="flex:none;margin-right:2.2px;" width="10" height="10" viewBox="0 0 10 10"><path d="M2.6 5h1.6M4.2 2v6M4.2 2h2.4M4.2 8h2.4" stroke="#5a6a90" stroke-width="0.9" fill="none"/><circle cx="1.5" cy="5" r="1.35" fill="#3a9a40"/><circle cx="8" cy="2" r="1.7" fill="#3a9a40"/><circle cx="8" cy="8" r="1.7" fill="#3a9a40"/></svg><div class="c"><div class="st">&lt;&lt;Fork&gt;&gt;</div></div></div>
<div class="n" style="left:78px;top:164px;width:120px;height:22px"><svg preserveAspectRatio="none" style="flex:none;margin-right:1px;" width="10" height="10" viewBox="0 0 10 10"><path d="M0.6 2.8h4.4l1.8 1.8v4.6H0.6z" fill="#f6f3e6" stroke="#d0b878" stroke-width="0.7"/><path d="M4 4h3.8l1.8 1.8v4H4z" fill="#ccd8f0" stroke="#d8c080" stroke-width="0.7"/><path d="M5.2 5.6h2.6v3.6H5.2z" fill="#a4b8e0"/><path d="M1 2.4L3.2 4.8L7.4 0.6" fill="none" stroke="#1450b8" stroke-width="1.5"/></svg><div class="c"><div class="st">&lt;&lt;Task Node&gt;&gt;</div><div class="nm">Validacio CS Seguretat</div></div></div>
<div class="n" style="left:243px;top:164px;width:135px;height:22px"><svg preserveAspectRatio="none" style="flex:none;margin-right:1px;" width="10" height="10" viewBox="0 0 10 10"><path d="M0.6 2.8h4.4l1.8 1.8v4.6H0.6z" fill="#f6f3e6" stroke="#d0b878" stroke-width="0.7"/><path d="M4 4h3.8l1.8 1.8v4H4z" fill="#ccd8f0" stroke="#d8c080" stroke-width="0.7"/><path d="M5.2 5.6h2.6v3.6H5.2z" fill="#a4b8e0"/><path d="M1 2.4L3.2 4.8L7.4 0.6" fill="none" stroke="#1450b8" stroke-width="1.5"/></svg><div class="c"><div class="st">&lt;&lt;Task Node&gt;&gt;</div><div class="nm">Validacio CS Sistemes</div></div></div>
<div class="n" style="left:422px;top:164px;width:128px;height:22px"><svg preserveAspectRatio="none" style="flex:none;margin-right:1px;" width="10" height="10" viewBox="0 0 10 10"><path d="M0.6 2.8h4.4l1.8 1.8v4.6H0.6z" fill="#f6f3e6" stroke="#d0b878" stroke-width="0.7"/><path d="M4 4h3.8l1.8 1.8v4H4z" fill="#ccd8f0" stroke="#d8c080" stroke-width="0.7"/><path d="M5.2 5.6h2.6v3.6H5.2z" fill="#a4b8e0"/><path d="M1 2.4L3.2 4.8L7.4 0.6" fill="none" stroke="#1450b8" stroke-width="1.5"/></svg><div class="c"><div class="st">&lt;&lt;Task Node&gt;&gt;</div><div class="nm">Validacio CS Desenvolupament</div></div></div>
<div class="n" style="left:597px;top:163.5px;width:142px;height:22px"><svg preserveAspectRatio="none" style="flex:none;margin-right:1px;" width="10" height="10" viewBox="0 0 10 10"><path d="M0.6 2.8h4.4l1.8 1.8v4.6H0.6z" fill="#f6f3e6" stroke="#d0b878" stroke-width="0.7"/><path d="M4 4h3.8l1.8 1.8v4H4z" fill="#ccd8f0" stroke="#d8c080" stroke-width="0.7"/><path d="M5.2 5.6h2.6v3.6H5.2z" fill="#a4b8e0"/><path d="M1 2.4L3.2 4.8L7.4 0.6" fill="none" stroke="#1450b8" stroke-width="1.5"/></svg><div class="c"><div class="st">&lt;&lt;Task Node&gt;&gt;</div><div class="nm">Validació CS Telecomunicacions</div></div></div>
<div class="n s1" style="left:243px;top:216px;width:135px;height:15px"><svg preserveAspectRatio="none" style="flex:none;margin-right:2.2px;" width="10" height="10" viewBox="0 0 10 10"><path d="M3 1.9h1.6v6.2H3M4.6 5h2.4" stroke="#4a8a60" stroke-width="0.9" fill="none"/><circle cx="1.9" cy="1.9" r="1.6" fill="#3a9a40"/><circle cx="1.9" cy="8.1" r="1.6" fill="#3a9a40"/><circle cx="8" cy="5" r="1.5" fill="#3a9a40"/></svg><div class="c"><div class="st">&lt;&lt;Join&gt;&gt;</div></div></div>
<div class="n" style="left:243px;top:261.4px;width:135px;height:21.3px"><svg preserveAspectRatio="none" style="flex:none;margin-right:1.8px;" width="10" height="10" viewBox="0 0 10 10"><path d="M5 2.6C5 0.6 8.6 0.6 8.6 2.8C8.6 4.4 6.8 4.2 6.8 6" fill="none" stroke="#1a4fb0" stroke-width="1.5"/><circle cx="6.8" cy="8" r="0.9" fill="#1a4fb0"/><path d="M4.4 4.2C1.4 3.6 0.2 6.8 2.4 8.4M3 9.2C5 9.8 6 9 5.4 8" fill="none" stroke="#5f86c8" stroke-width="0.9"/><path d="M1.4 8.8l1.8 0.6l-0.6 -1.8z" fill="#5f86c8"/></svg><div class="c"><div class="st">&lt;&lt;Decision&gt;&gt;</div><div class="nm">Validat?</div></div></div>
<div class="n" style="left:4.5px;top:284px;width:119px;height:21.5px"><svg preserveAspectRatio="none" style="flex:none;margin-right:1px;" width="10" height="10" viewBox="0 0 10 10"><path d="M0.6 2.8h4.4l1.8 1.8v4.6H0.6z" fill="#f6f3e6" stroke="#d0b878" stroke-width="0.7"/><path d="M4 4h3.8l1.8 1.8v4H4z" fill="#ccd8f0" stroke="#d8c080" stroke-width="0.7"/><path d="M5.2 5.6h2.6v3.6H5.2z" fill="#a4b8e0"/><path d="M1 2.4L3.2 4.8L7.4 0.6" fill="none" stroke="#1450b8" stroke-width="1.5"/></svg><div class="c"><div class="st">&lt;&lt;Task Node&gt;&gt;</div><div class="nm">gestionar_signatura</div></div></div>
<div class="n" style="left:257.5px;top:320px;width:105.5px;height:21.5px"><svg preserveAspectRatio="none" style="flex:none;margin-right:1px;" width="10" height="10" viewBox="0 0 10 10"><path d="M0.6 2.8h4.4l1.8 1.8v4.6H0.6z" fill="#f6f3e6" stroke="#d0b878" stroke-width="0.7"/><path d="M4 4h3.8l1.8 1.8v4H4z" fill="#ccd8f0" stroke="#d8c080" stroke-width="0.7"/><path d="M5.2 5.6h2.6v3.6H5.2z" fill="#a4b8e0"/><path d="M1 2.4L3.2 4.8L7.4 0.6" fill="none" stroke="#1450b8" stroke-width="1.5"/></svg><div class="c"><div class="st">&lt;&lt;Task Node&gt;&gt;</div><div class="nm">Generar autorització</div></div></div>
<div class="n" style="left:244.5px;top:379.5px;width:135.5px;height:22px"><svg preserveAspectRatio="none" style="flex:none;margin-right:1px;" width="10" height="10" viewBox="0 0 10 10"><path d="M7 5L3.8 2v1.7H0.8v2.6h3V8z" fill="#f6d45a" stroke="#c08a1a" stroke-width="0.8" stroke-linejoin="round"/><circle cx="8.6" cy="5" r="1.4" fill="#2f8f35"/></svg><div class="c"><div class="st">&lt;&lt;State&gt;&gt;</div><div class="nm">portasignatures director</div></div></div>
<div class="n" style="left:246px;top:464px;width:135.5px;height:21.5px"><svg preserveAspectRatio="none" style="flex:none;margin-right:3.4px;" width="10" height="10" viewBox="0 0 10 10"><rect x="2.4" y="1.4" width="7" height="7.2" rx="0.8" fill="#e02a34" stroke="#f08a8a" stroke-width="0.8"/></svg><div class="c"><div class="st">&lt;&lt;End State&gt;&gt;</div><div class="nm">fi</div></div></div>
<div class="l" style="left:65.8px;top:71.7px">Inici_Expedient</div>
<div class="l" style="left:232.6px;top:142.7px;letter-spacing:-0.3px">CS Seg</div>
<div class="l" style="left:312.8px;top:142.7px;letter-spacing:-0.45px">CS Sist</div>
<div class="l" style="left:394.6px;top:142.7px;letter-spacing:-0.3px">CS Des</div>
<div class="l" style="left:485.7px;top:143px">to Validació CS Telecomunicacions</div>
<div class="l" style="left:586.6px;top:168.9px">NO</div>
<div class="l" style="left:183.9px;top:287.7px">PortaSignatures</div>
<div class="l" style="left:312.6px;top:295.6px;letter-spacing:-0.03px">to portasignatures director</div>
<div class="l" style="left:74.7px;top:353.4px">Retornar</div>
<div class="l" style="left:0.2px;top:356.4px">ar Expedient</div>
<div class="l" style="left:315.6px;top:426.1px">Correcte</div>
</div>


<!-- STATUS -->
<div class="a" style="left:140px;top:577.4px;width:656px;height:1.2px;background:#3c3c3c"></div><div class="a" style="left:140px;top:578.5px;width:656px;height:9.5px;background:#e9e7e2"></div><div class="a" style="left:171px;top:578.5px;width:522px;height:9.5px;box-sizing:border-box;background:#d4d0c8;border:0.7px solid;border-color:#f8f8f6 #55524c #55524c #f8f8f6"></div><div class="a" style="left:140px;top:578.5px;width:10px;height:9.5px;box-sizing:border-box;background:#d4d0c8;border:0.7px solid;border-color:#f8f8f6 #55524c #55524c #f8f8f6"><svg class="a" style="left:2.2px;top:1.2px" width="5" height="6" viewBox="0 0 5 6"><path d="M3.4 1.2L1 3L3.4 4.8z" fill="#000"/></svg></div><div class="a" style="left:786px;top:578.5px;width:10px;height:9.5px;box-sizing:border-box;background:#d4d0c8;border:0.7px solid;border-color:#f8f8f6 #55524c #55524c #f8f8f6"><svg class="a" style="left:2.2px;top:1.2px" width="5" height="6" viewBox="0 0 5 6"><path d="M1.4 1.2L3.8 3L1.4 4.8z" fill="#000"/></svg></div><div class="a" style="left:24px;top:588px;width:28.5px;height:10.5px;background:#fff"></div><div class="a" style="left:52.5px;top:588.5px;width:0.8px;height:10px;background:#9a968e"></div><div class="a" style="left:93px;top:588.5px;width:0.8px;height:10px;background:#9a968e"></div><div class="a" style="left:118px;top:588.5px;width:0.8px;height:10px;background:#9a968e"></div><div class="a" style="left:143.5px;top:588.5px;width:0.8px;height:10px;background:#9a968e"></div><div class="a" style="left:52.5px;top:598px;width:91px;height:0.8px;background:#9a968e"></div><div class="t" style="left:25.8px;top:588.8px;letter-spacing:-0.25px">Diagram</div><div class="t" style="left:55px;top:588.8px;letter-spacing:-0.25px">Deployment</div><div class="t" style="left:95.8px;top:588.8px;letter-spacing:-0.25px">Design</div><div class="t" style="left:120.8px;top:588.8px;letter-spacing:-0.25px">Source</div><div class="a" style="left:5px;top:603px;width:1px;height:11.5px;background:#fff"></div><div class="a" style="left:6px;top:603px;width:0.7px;height:11.5px;background:#8a867e"></div><svg class="a" style="left:11.6px;top:604px" width="10" height="10" viewBox="0 0 10 10"><rect x="1" y="2" width="3.6" height="7" fill="#fff" stroke="#b8b4ac" stroke-width="0.6"/><rect x="1" y="1.6" width="3.6" height="1.6" fill="#3a78d8"/><path d="M7.2 1L9.2 3L7.2 5L5.2 3z" fill="#f8d040" stroke="#b88a18" stroke-width="0.5"/></svg><svg class="a" style="left:696px;top:600px" width="104" height="22" viewBox="696 600 104 22"><path d="M702 622V606Q702 602.6 705.4 602.6H800" fill="none" stroke="#f2f0ec" stroke-width="1"/></svg><div class="a" style="left:705px;top:604px;width:1px;height:11.5px;background:#fff"></div><div class="a" style="left:706px;top:604px;width:0.7px;height:11.5px;background:#8a867e"></div><div class="a" style="left:543.4px;top:603.6px;width:0.9px;height:11px;background:#fff"></div><div class="a" style="left:544.3px;top:603.6px;width:0.6px;height:11px;background:#a8a49c"></div><svg class="a" style="left:709.6px;top:605.4px" width="9" height="9.6" viewBox="0 0 10 10"><rect x="3" y="3.6" width="4.6" height="3" fill="#fff" stroke="#444" stroke-width="0.7" transform="skewX(-12)"/></svg><svg class="a" style="left:724px;top:605.4px" width="9.6" height="9.6" viewBox="0 0 10 10"><rect x="0.6" y="1" width="8.8" height="8" fill="#dce8f8" stroke="#8aa0c8" stroke-width="0.7"/><rect x="0.9" y="1.3" width="8.2" height="1.6" fill="#88a8e0"/><path d="M3.6 3v6" stroke="#8aa0c8" stroke-width="0.6"/></svg><svg class="a" style="left:739.6px;top:605.4px" width="9" height="9.6" viewBox="0 0 10 10"><ellipse cx="5" cy="5.4" rx="1.8" ry="2.8" fill="#222"/><circle cx="5" cy="2" r="1.1" fill="#222"/><path d="M1 2.6L3.6 4.2M9 2.6L6.4 4.2M0.6 5.6H9.4M1 9L3.6 7M9 9L6.4 7" stroke="#222" stroke-width="0.7"/></svg><svg class="a" style="left:753.8px;top:605.4px" width="9.6" height="9.6" viewBox="0 0 10 10"><rect x="0.6" y="0.8" width="8.8" height="8.4" rx="0.8" fill="#2a60c0" stroke="#1a3c88" stroke-width="0.6"/><rect x="2" y="2.2" width="6" height="3.8" fill="#e8f0fc"/><rect x="3.6" y="7" width="2.8" height="1.4" fill="#c8d8f4"/></svg><svg class="a" style="left:768px;top:605.4px" width="9.6" height="9.6" viewBox="0 0 10 10"><path d="M2 1V9M5 1V9M8 1V9" stroke="#2a60c0" stroke-width="0.9"/><rect x="1" y="2" width="2" height="2" fill="#f8d040" stroke="#b88a18" stroke-width="0.4"/><rect x="4" y="5.6" width="2" height="2" fill="#f8d040" stroke="#b88a18" stroke-width="0.4"/><rect x="7" y="3" width="2" height="2" fill="#f8d040" stroke="#b88a18" stroke-width="0.4"/><path d="M0.4 5.6L3 8" stroke="#2a8a40" stroke-width="0.9"/></svg><svg class="a" style="left:781.6px;top:605.4px" width="10.4" height="9.6" viewBox="0 0 10 10"><path d="M0.8 9.4L1.8 6.4L7.4 1L9.4 3L3.8 8.4z" fill="#f8d478" stroke="#b08030" stroke-width="0.7" stroke-linejoin="round"/><path d="M0.8 9.4L1.8 6.4L3.8 8.4z" fill="#fff" stroke="#a09070" stroke-width="0.5"/></svg>

</body>
</html>
